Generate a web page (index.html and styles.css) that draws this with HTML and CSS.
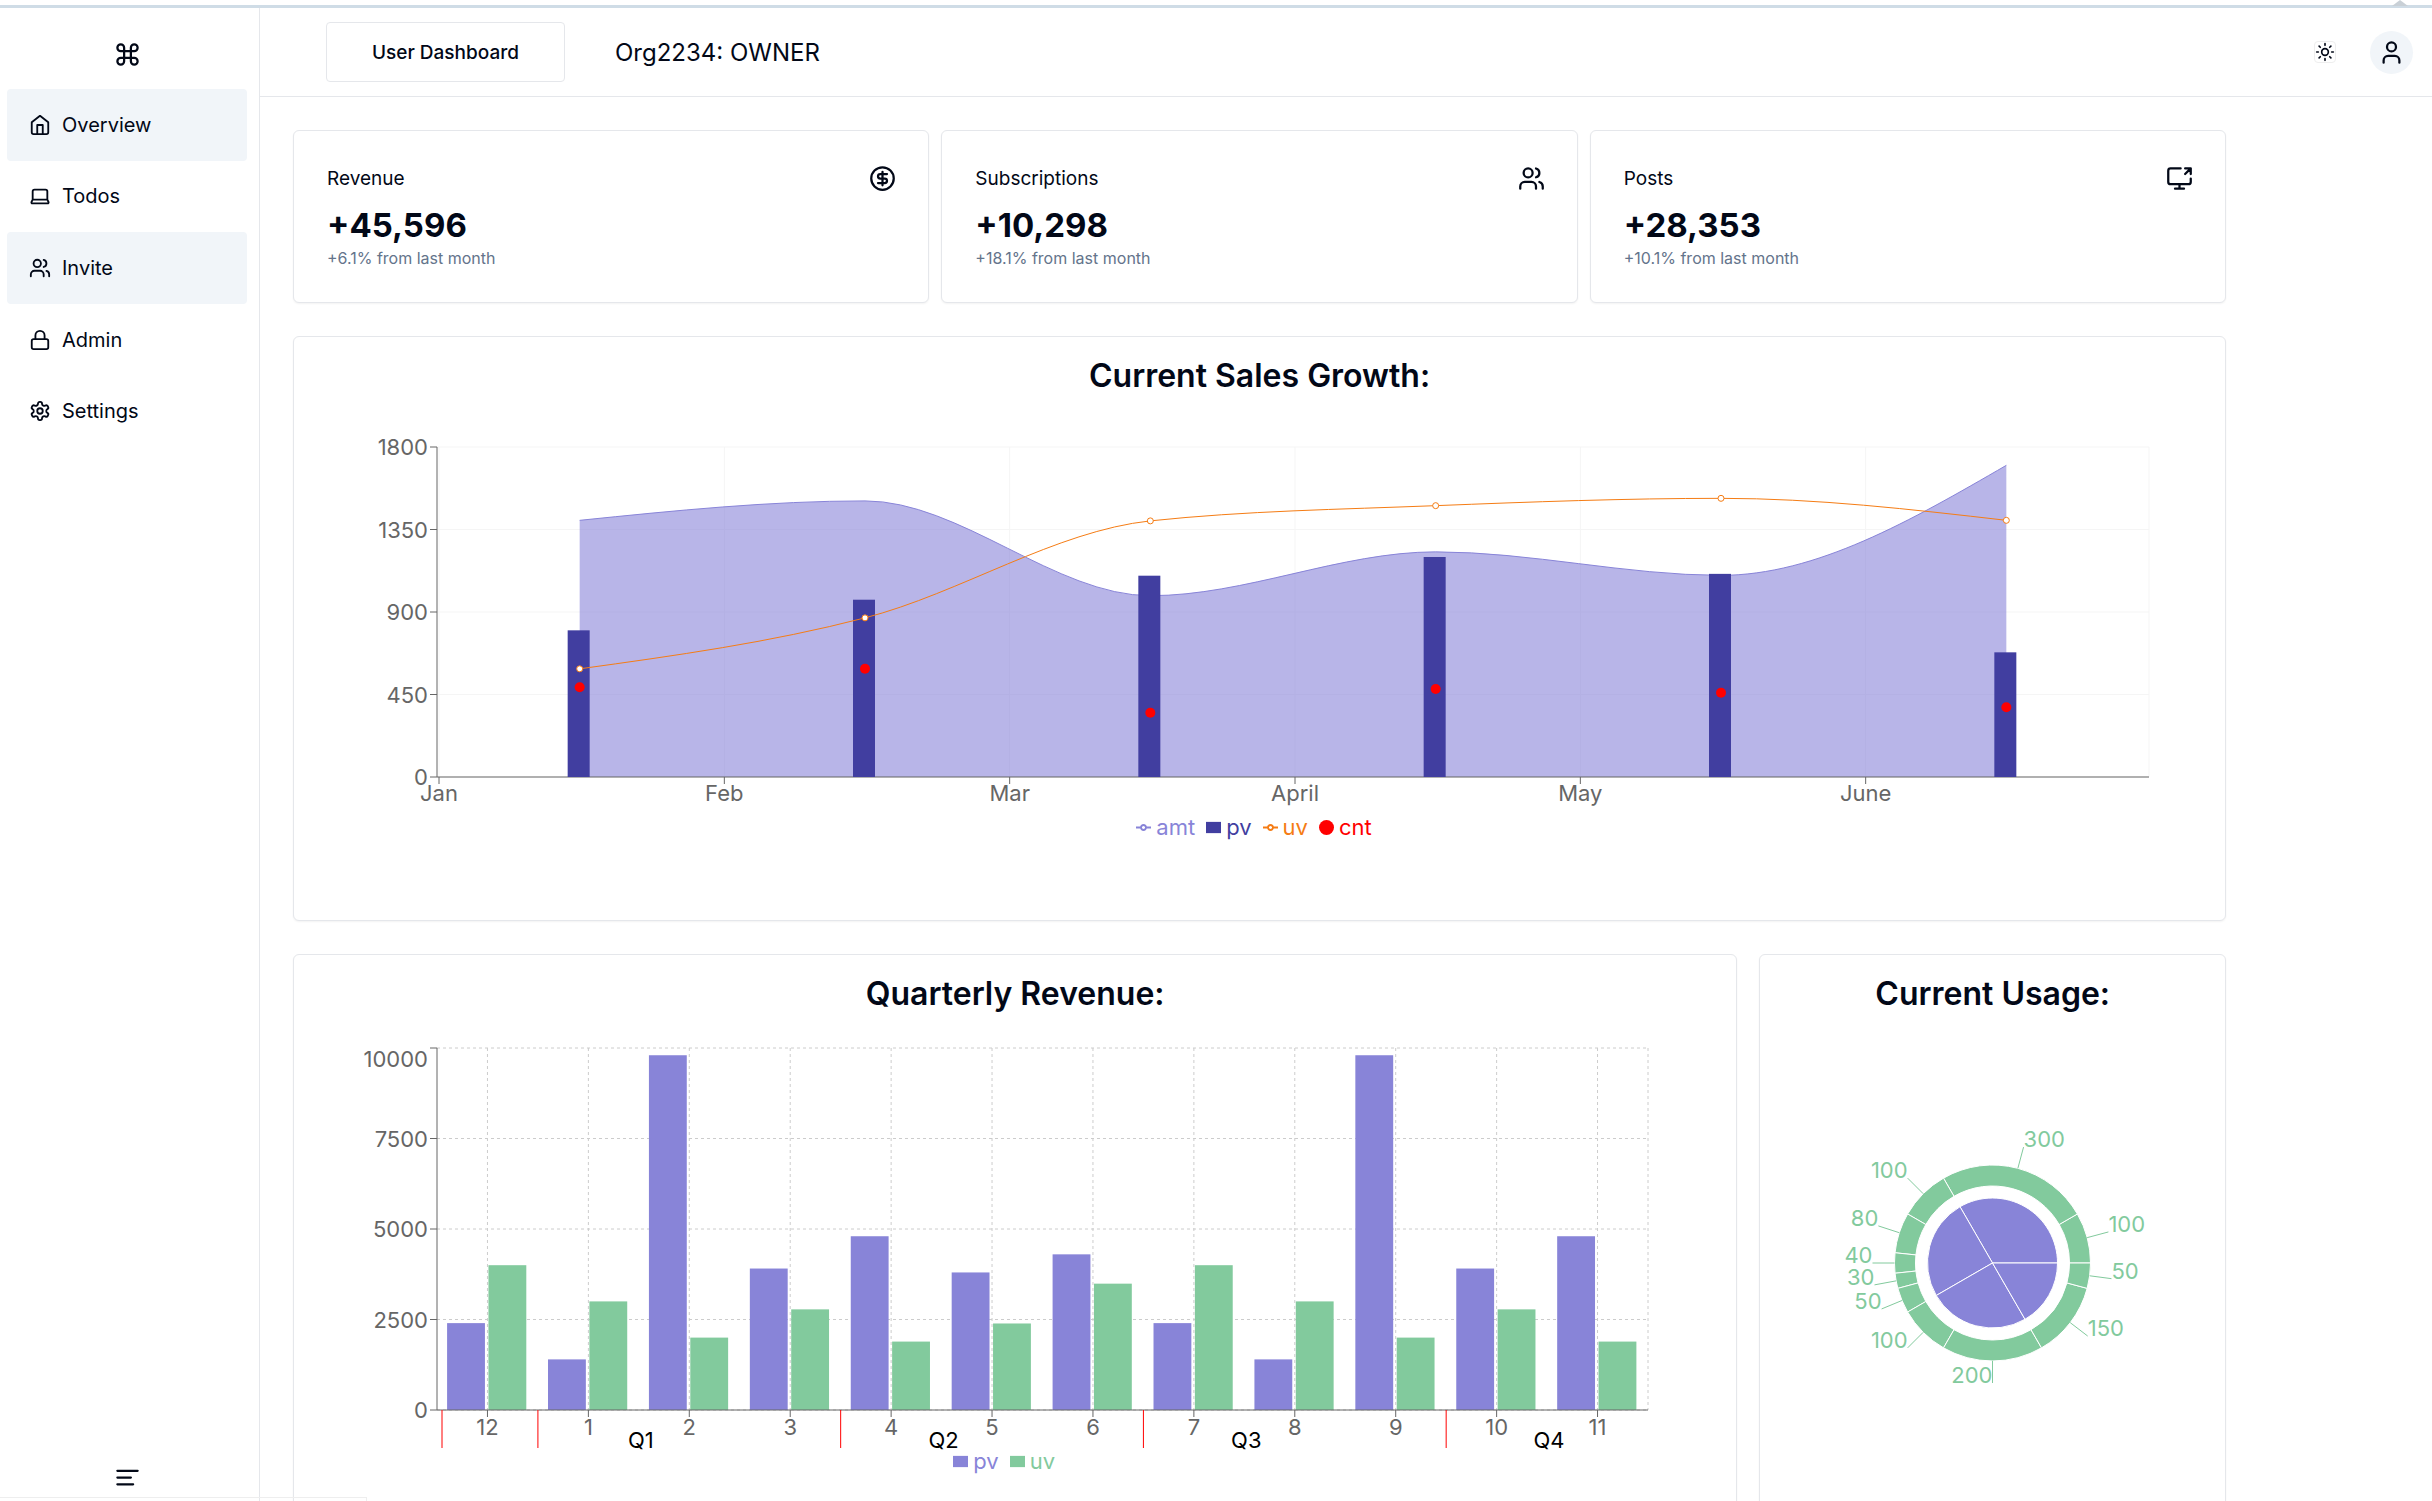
FILE: index.html
```html
<!DOCTYPE html>
<html lang="en">
<head>
  <meta charset="UTF-8" />
  <meta name="viewport" content="width=device-width, initial-scale=1.0" />
  <title>User Dashboard</title>
  <link rel="stylesheet" href="styles.css">
</head>
<body>
  <div class="window-edge">
    <svg class="window-notch" width="16" height="6" viewBox="0 0 16 6" aria-hidden="true"><path d="M0 6 8 0l8 6z" /></svg>
  </div>

  <div class="app">
    <aside class="sidebar">
      <a class="brand" href="#" aria-label="Home">
        <svg class="icon icon-lg" viewBox="0 0 24 24"><path d="M15 6v12a3 3 0 1 0 3-3H6a3 3 0 1 0 3 3V6a3 3 0 1 0-3 3h12a3 3 0 1 0-3-3" /></svg>
      </a>

      <nav class="nav">
        <a class="nav-link active" href="#">
          <svg class="icon" viewBox="0 0 24 24"><path d="m3 9 9-7 9 7v11a2 2 0 0 1-2 2H5a2 2 0 0 1-2-2z" /><path d="M9 22V12h6v10" /></svg>
          Overview
        </a>
        <a class="nav-link" href="#">
          <svg class="icon" viewBox="0 0 24 24"><path d="M20 16V7a2 2 0 0 0-2-2H6a2 2 0 0 0-2 2v9m16 0H4m16 0 1.28 2.55a1 1 0 0 1-.9 1.45H3.62a1 1 0 0 1-.9-1.45L4 16" /></svg>
          Todos
        </a>
        <a class="nav-link active" href="#">
          <svg class="icon" viewBox="0 0 24 24"><path d="M16 21v-2a4 4 0 0 0-4-4H6a4 4 0 0 0-4 4v2" /><circle cx="9" cy="7" r="4" /><path d="M22 21v-2a4 4 0 0 0-3-3.87" /><path d="M16 3.13a4 4 0 0 1 0 7.75" /></svg>
          Invite
        </a>
        <a class="nav-link" href="#">
          <svg class="icon" viewBox="0 0 24 24"><rect x="3" y="11" width="18" height="11" rx="2" /><path d="M7 11V7a5 5 0 0 1 10 0v4" /></svg>
          Admin
        </a>
        <a class="nav-link" href="#">
          <svg class="icon" viewBox="0 0 24 24"><path d="M12.22 2h-.44a2 2 0 0 0-2 2v.18a2 2 0 0 1-1 1.73l-.43.25a2 2 0 0 1-2 0l-.15-.08a2 2 0 0 0-2.73.73l-.22.38a2 2 0 0 0 .73 2.73l.15.1a2 2 0 0 1 1 1.72v.51a2 2 0 0 1-1 1.74l-.15.09a2 2 0 0 0-.73 2.73l.22.38a2 2 0 0 0 2.73.73l.15-.08a2 2 0 0 1 2 0l.43.25a2 2 0 0 1 1 1.73V20a2 2 0 0 0 2 2h.44a2 2 0 0 0 2-2v-.18a2 2 0 0 1 1-1.73l.43-.25a2 2 0 0 1 2 0l.15.08a2 2 0 0 0 2.73-.73l.22-.39a2 2 0 0 0-.73-2.73l-.15-.08a2 2 0 0 1-1-1.74v-.5a2 2 0 0 1 1-1.74l.15-.09a2 2 0 0 0 .73-2.73l-.22-.38a2 2 0 0 0-2.73-.73l-.15.08a2 2 0 0 1-2 0l-.43-.25a2 2 0 0 1-1-1.73V4a2 2 0 0 0-2-2z" /><circle cx="12" cy="12" r="3" /></svg>
          Settings
        </a>
      </nav>

      <button class="collapse" type="button" aria-label="Collapse sidebar">
        <svg class="icon icon-lg" viewBox="0 0 24 24"><path d="M21 6H3M15 12H3M17 18H3" /></svg>
      </button>
    </aside>

    <div class="main">
      <header class="header">
        <button class="btn-outline" type="button">User Dashboard</button>
        <span class="org">Org2234: OWNER</span>
        <div class="header-actions">
          <button class="theme-toggle" type="button" aria-label="Toggle theme">
            <svg class="icon" viewBox="0 0 24 24"><circle cx="12" cy="12" r="4" /><path d="M12 2v2M12 20v2M4.93 4.93l1.41 1.41M17.66 17.66l1.41 1.41M2 12h2M20 12h2M6.34 17.66l-1.41 1.41M19.07 4.93l-1.41 1.41" /></svg>
          </button>
          <button class="avatar" type="button" aria-label="Account">
            <svg class="icon icon-lg" viewBox="0 0 24 24"><path d="M19 21v-2a4 4 0 0 0-4-4H9a4 4 0 0 0-4 4v2" /><circle cx="12" cy="7" r="4" /></svg>
          </button>
        </div>
      </header>

      <main class="content">
        <section class="stats">
          <div class="card stat">
            <div class="stat-head">
              <h3>Revenue</h3>
              <svg class="icon icon-lg" viewBox="0 0 24 24"><circle cx="12" cy="12" r="10" /><path d="M16 8h-6a2 2 0 1 0 0 4h4a2 2 0 1 1 0 4H8" /><path d="M12 18V6" /></svg>
            </div>
            <div class="stat-value">+45,596</div>
            <p class="stat-note">+6.1% from last month</p>
          </div>
          <div class="card stat">
            <div class="stat-head">
              <h3>Subscriptions</h3>
              <svg class="icon icon-lg" viewBox="0 0 24 24"><path d="M16 21v-2a4 4 0 0 0-4-4H6a4 4 0 0 0-4 4v2" /><circle cx="9" cy="7" r="4" /><path d="M22 21v-2a4 4 0 0 0-3-3.87" /><path d="M16 3.13a4 4 0 0 1 0 7.75" /></svg>
            </div>
            <div class="stat-value">+10,298</div>
            <p class="stat-note">+18.1% from last month</p>
          </div>
          <div class="card stat">
            <div class="stat-head">
              <h3>Posts</h3>
              <svg class="icon icon-lg" viewBox="0 0 24 24"><path d="M13 3H4a2 2 0 0 0-2 2v10a2 2 0 0 0 2 2h16a2 2 0 0 0 2-2v-3" /><path d="M8 21h8M12 17v4M17 8l5-5M17 3h5v5" /></svg>
            </div>
            <div class="stat-value">+28,353</div>
            <p class="stat-note">+10.1% from last month</p>
          </div>
        </section>

        <section class="charts">
          <div class="card chart-card span-12">
            <h2>Current Sales Growth:</h2>
            <svg class="chart chart-growth" id="growthChart" role="img" aria-label="Current sales growth"></svg>
            <ul class="legend">
              <li class="c-amt"><svg viewBox="0 0 32 32"><path d="M0 16h10.67a5.33 5.33 0 1 1 10.66 0H32M21.33 16a5.33 5.33 0 1 1-10.66 0" /></svg>amt</li>
              <li class="c-pv-dark"><svg viewBox="0 0 32 32"><path class="solid" d="M0 4h32v24H0z" /></svg>pv</li>
              <li class="c-uv-line"><svg viewBox="0 0 32 32"><path d="M0 16h10.67a5.33 5.33 0 1 1 10.66 0H32M21.33 16a5.33 5.33 0 1 1-10.66 0" /></svg>uv</li>
              <li class="c-cnt"><svg viewBox="0 0 32 32"><circle class="solid" cx="16" cy="16" r="16" /></svg>cnt</li>
            </ul>
          </div>

          <div class="card chart-card span-9">
            <h2>Quarterly Revenue:</h2>
            <svg class="chart chart-revenue" id="revenueChart" role="img" aria-label="Quarterly revenue"></svg>
            <ul class="legend legend-revenue">
              <li class="c-pv"><svg viewBox="0 0 32 32"><path class="solid" d="M0 4h32v24H0z" /></svg>pv</li>
              <li class="c-uv"><svg viewBox="0 0 32 32"><path class="solid" d="M0 4h32v24H0z" /></svg>uv</li>
            </ul>
          </div>

          <div class="card chart-card span-3">
            <h2>Current Usage:</h2>
            <svg class="chart chart-usage" id="usageChart" role="img" aria-label="Current usage"></svg>
          </div>
        </section>
      </main>
    </div>
  </div>

  <div class="status-bubble"></div>

  <script src="charts.js"></script>
</body>
</html>
```
FILE: styles.css
```css
:root {
  --border: #e5e7eb;
  --text: #020817;
  --muted: #64748b;
  --accent: #f1f5f9;
  --purple: #8884d8;
  --green: #82ca9d;
  --indigo: #413ea0;
  --orange: #f57c14;
  --font: Inter, "Liberation Sans", sans-serif;
}

* {
  box-sizing: border-box;
}

body {
  margin: 0;
  height: 100vh;
  overflow: hidden;
  display: flex;
  flex-direction: column;
  font-family: var(--font);
  background: #fff;
  color: var(--text);
}

h2,
h3,
p,
ul {
  margin: 0;
  padding: 0;
}

button {
  padding: 0;
  border: none;
  background: transparent;
  font-family: inherit;
  color: inherit;
  cursor: pointer;
}

.icon {
  width: 22px;
  height: 22px;
  flex: none;
  fill: none;
  stroke: currentColor;
  stroke-width: 2;
  stroke-linecap: round;
  stroke-linejoin: round;
}

.icon-lg {
  width: 27px;
  height: 27px;
}

/* strip of the window frame above the page */
.window-edge {
  flex: none;
  height: 8px;
  border-bottom: 3px solid #cfdce6;
  position: relative;
}

.window-notch {
  position: absolute;
  right: 24px;
  top: 0;
  fill: #c9d0d6;
}

.app {
  flex: 1;
  min-height: 0;
  display: flex;
}

/* sidebar */
.sidebar {
  flex: none;
  width: 260px;
  padding: 0 12px 10px 7px;
  border-right: 1px solid var(--border);
  display: flex;
  flex-direction: column;
}

.brand {
  height: 81px;
  padding-bottom: 21px;
  display: flex;
  align-items: flex-end;
  justify-content: center;
  color: inherit;
}

.nav {
  height: 358px;
  display: grid;
  grid-auto-rows: 1fr;
}

.nav-link {
  display: flex;
  align-items: center;
  gap: 11px;
  padding: 0 22px;
  border-radius: 4px;
  font-size: 20px;
  color: var(--text);
  text-decoration: none;
}

.nav-link.active,
.nav-link:hover {
  background: var(--accent);
}

.collapse {
  margin: auto auto 0;
  display: flex;
}

/* header */
.main {
  flex: 1;
  min-width: 0;
  display: flex;
  flex-direction: column;
}

.header {
  flex: none;
  height: 89px;
  padding: 0 19px 0 66px;
  border-bottom: 1px solid var(--border);
  display: flex;
  align-items: center;
}

.btn-outline {
  height: 60px;
  padding: 0 45px;
  border: 1px solid var(--border);
  border-radius: 4px;
  font-size: 19px;
  font-weight: 500;
}

.org {
  margin-left: 50px;
  font-size: 24px;
}

.header-actions {
  margin-left: auto;
  display: flex;
  align-items: center;
  gap: 34px;
}

.theme-toggle {
  width: 22px;
  height: 22px;
  border: 1px solid #eee;
  border-radius: 4px;
  display: grid;
  place-items: center;
}

.theme-toggle .icon {
  width: 20px;
  height: 20px;
}

.avatar {
  width: 43px;
  height: 43px;
  border-radius: 50%;
  background: var(--accent);
  display: grid;
  place-items: center;
}

/* content */
.content {
  width: 89%;
  margin-left: 33px;
  padding-top: 33px;
}

.card {
  background: #fff;
  border: 1px solid var(--border);
  border-radius: 6px;
  box-shadow: 0 1px 2px rgba(0, 0, 0, 0.05);
}

.stats {
  display: grid;
  grid-template-columns: repeat(3, minmax(0, 1fr));
  gap: 12px;
  margin-bottom: 33px;
}

.stat {
  padding: 33px 32px 33px 33px;
}

.stat-head {
  display: flex;
  align-items: center;
  justify-content: space-between;
  height: 28px;
}

.stat-head h3 {
  font-size: 19px;
  font-weight: 400;
}

.stat-value {
  margin-top: 12px;
  font-size: 33px;
  font-weight: 700;
  line-height: 43px;
}

.stat-note {
  font-size: 16px;
  line-height: 22px;
  color: var(--muted);
}

.charts {
  display: grid;
  grid-template-columns: repeat(12, minmax(0, 1fr));
  gap: 33px 22px;
}

.span-12 {
  grid-column: span 12;
}

.span-9 {
  grid-column: span 9;
}

.span-3 {
  grid-column: span 3;
}

.chart-card {
  min-height: 585px;
  padding-top: 19px;
}

.chart-card h2 {
  font-size: 32px;
  font-weight: 600;
  line-height: 40px;
  text-align: center;
}

.chart {
  display: block;
  width: 100%;
  overflow: visible;
  font-size: 22px;
}

.chart-growth {
  height: 416px;
}

.chart-revenue {
  height: 432px;
}

.chart-usage {
  height: 480px;
}

.chart text {
  fill: #666;
}

.chart .end {
  text-anchor: end;
}

.chart .mid {
  text-anchor: middle;
}

.chart .axis {
  stroke: #666;
}

.chart .grid {
  stroke: #f5f5f5;
}

.chart .grid-dashed {
  stroke: #ccc;
  stroke-dasharray: 3 3;
}

.chart .area {
  fill: var(--purple);
  fill-opacity: 0.6;
}

.chart .area-line {
  fill: none;
  stroke: var(--purple);
}

.chart .line {
  fill: none;
  stroke: var(--orange);
}

.chart .dot {
  fill: #fff;
  stroke: var(--orange);
}

.chart .cnt {
  fill: red;
}

.chart .bar-dark {
  fill: var(--indigo);
}

.chart .bar-pv {
  fill: var(--purple);
}

.chart .bar-uv {
  fill: var(--green);
}

.chart .quarter-line {
  stroke: red;
}

.chart .quarter {
  fill: #000;
}

.chart .slice-pv {
  fill: var(--purple);
  stroke: #fff;
}

.chart .slice-uv {
  fill: var(--green);
  stroke: #fff;
}

.chart .label-line {
  stroke: var(--green);
}

.chart .label {
  fill: var(--green);
}

.legend {
  list-style: none;
  display: flex;
  justify-content: center;
  gap: 11px;
  padding-right: 11px;
  font-size: 22px;
  line-height: 30px;
}

.legend-revenue {
  padding-right: 22px;
}

.legend li {
  display: flex;
  align-items: center;
  gap: 5px;
}

.legend svg {
  width: 15px;
  height: 15px;
  fill: none;
  stroke: currentColor;
  stroke-width: 4;
}

.legend .solid {
  fill: currentColor;
  stroke: none;
}

.c-amt,
.c-pv {
  color: var(--purple);
}

.c-pv-dark {
  color: var(--indigo);
}

.c-uv-line {
  color: var(--orange);
}

.c-cnt {
  color: red;
}

.c-uv {
  color: var(--green);
}

/* browser link bubble in the corner */
.status-bubble {
  position: fixed;
  left: 0;
  bottom: 0;
  width: 367px;
  height: 4px;
  border: 1px solid #eee;
  border-width: 1px 1px 0 0;
}
```
FILE: charts.js
```js
const SVG_NS = "http://www.w3.org/2000/svg";

const growthData = [
  { name: "Jan", uv: 590, pv: 800, amt: 1400, cnt: 490 },
  { name: "Feb", uv: 868, pv: 967, amt: 1506, cnt: 590 },
  { name: "Mar", uv: 1397, pv: 1098, amt: 989, cnt: 350 },
  { name: "April", uv: 1480, pv: 1200, amt: 1228, cnt: 480 },
  { name: "May", uv: 1520, pv: 1108, amt: 1100, cnt: 460 },
  { name: "June", uv: 1400, pv: 680, amt: 1700, cnt: 380 }
];

const revenueData = [
  { month: 12, uv: 4000, pv: 2400 },
  { month: 1, uv: 3000, pv: 1398 },
  { month: 2, uv: 2000, pv: 9800 },
  { month: 3, uv: 2780, pv: 3908 },
  { month: 4, uv: 1890, pv: 4800 },
  { month: 5, uv: 2390, pv: 3800 },
  { month: 6, uv: 3490, pv: 4300 },
  { month: 7, uv: 4000, pv: 2400 },
  { month: 8, uv: 3000, pv: 1398 },
  { month: 9, uv: 2000, pv: 9800 },
  { month: 10, uv: 2780, pv: 3908 },
  { month: 11, uv: 1890, pv: 4800 }
];

// both rings of the usage chart add up to 1200
const groups = [400, 300, 300, 200];
const parts = [100, 300, 100, 80, 40, 30, 50, 100, 200, 150, 50];

function add(parent, tag, attrs, text) {
  const el = document.createElementNS(SVG_NS, tag);
  for (const key in attrs) el.setAttribute(key, attrs[key]);
  if (text !== undefined) el.textContent = text;
  parent.appendChild(el);
  return el;
}

function line(svg, cls, x1, y1, x2, y2) {
  add(svg, "line", { class: cls, x1, y1, x2, y2 });
}

// cubic path that never overshoots its points
function monotonePath(pts) {
  const n = pts.length;
  const slope = [];
  for (let i = 0; i < n - 1; i++) {
    slope.push((pts[i + 1].y - pts[i].y) / (pts[i + 1].x - pts[i].x));
  }
  const t = [];
  for (let i = 1; i < n - 1; i++) {
    const a = slope[i - 1];
    const b = slope[i];
    const p = (a + b) / 2;
    t[i] = (Math.sign(a) + Math.sign(b)) * Math.min(Math.abs(a), Math.abs(b), Math.abs(p) / 2) || 0;
  }
  t[0] = (3 * slope[0] - t[1]) / 2;
  t[n - 1] = (3 * slope[n - 2] - t[n - 2]) / 2;

  let d = `M${pts[0].x},${pts[0].y}`;
  for (let i = 0; i < n - 1; i++) {
    const dx = (pts[i + 1].x - pts[i].x) / 3;
    d += `C${pts[i].x + dx},${pts[i].y + dx * t[i]},${pts[i + 1].x - dx},${pts[i + 1].y - dx * t[i + 1]},${pts[i + 1].x},${pts[i + 1].y}`;
  }
  return d;
}

function drawGrowth() {
  const svg = document.getElementById("growthChart");
  svg.replaceChildren();
  const left = 143, top = 51, height = 330;
  const right = svg.clientWidth - 76;
  const bottom = top + height;
  const band = (right - left) / growthData.length;
  const y = v => bottom - (v / 1800) * height;
  const cx = i => left + band * (i + 0.5);

  [0, 450, 900, 1350, 1800].forEach(v => line(svg, "grid", left, y(v), right, y(v)));
  growthData.forEach((d, i) => line(svg, "grid", left + 2 + band * i, top, left + 2 + band * i, bottom));
  line(svg, "grid", right, top, right, bottom);

  const amt = monotonePath(growthData.map((d, i) => ({ x: cx(i), y: y(d.amt) })));
  add(svg, "path", { class: "area", d: `${amt}L${cx(5)},${bottom}L${cx(0)},${bottom}Z` });
  add(svg, "path", { class: "area-line", d: amt });

  line(svg, "axis", left, bottom, right, bottom);
  line(svg, "axis", left, top, left, bottom);
  [0, 450, 900, 1350, 1800].forEach(v => {
    line(svg, "axis", left - 7, y(v), left, y(v));
    add(svg, "text", { class: "end", x: left - 9, y: y(v) + 8 }, v);
  });

  growthData.forEach((d, i) => {
    const x = left + 2 + band * i;
    line(svg, "axis", x, bottom, x, bottom + 7);
    add(svg, "text", { class: "mid", x, y: bottom + 24 }, d.name);
    add(svg, "rect", { class: "bar-dark", x: cx(i) - 12, y: y(d.pv), width: 22, height: bottom - y(d.pv) });
  });

  add(svg, "path", { class: "line", d: monotonePath(growthData.map((d, i) => ({ x: cx(i), y: y(d.uv) }))) });
  growthData.forEach((d, i) => {
    add(svg, "circle", { class: "dot", cx: cx(i), cy: y(d.uv), r: 3 });
    add(svg, "circle", { class: "cnt", cx: cx(i), cy: y(d.cnt), r: 5 });
  });
}

function drawRevenue() {
  const svg = document.getElementById("revenueChart");
  svg.replaceChildren();
  const left = 143, top = 34, height = 362;
  const right = svg.clientWidth - 88;
  const bottom = top + height;
  const band = (right - left) / revenueData.length;
  const y = v => bottom - (v / 10000) * height;
  const ticks = [0, 2500, 5000, 7500, 10000];

  ticks.forEach(v => line(svg, "grid-dashed", left, y(v), right, y(v)));
  revenueData.forEach((d, i) => line(svg, "grid-dashed", left + band * (i + 0.5), top, left + band * (i + 0.5), bottom));
  line(svg, "grid-dashed", right, top, right, bottom);

  line(svg, "axis", left, top, left, bottom);
  ticks.forEach(v => {
    line(svg, "axis", left - 7, y(v), left, y(v));
    // the top label stays inside the chart
    add(svg, "text", { class: "end", x: left - 9, y: Math.max(y(v) + 8, top + 19) }, v);
  });

  const barWidth = band * 0.375;
  revenueData.forEach((d, i) => {
    const start = left + band * i;
    const cx = start + band / 2;
    add(svg, "rect", { class: "bar-pv", x: start + band * 0.1, y: y(d.pv), width: barWidth, height: bottom - y(d.pv) });
    add(svg, "rect", { class: "bar-uv", x: cx + 1, y: y(d.uv), width: barWidth, height: bottom - y(d.uv) });
    line(svg, "axis", cx, bottom, cx, bottom + 7);
    add(svg, "text", { class: "mid", x: cx, y: bottom + 25 }, d.month);
  });
  line(svg, "axis", left, bottom, right, bottom);

  line(svg, "quarter-line", left + 5, bottom, left + 5, bottom + 38);
  for (let q = 0; q < 4; q++) {
    const x = left + band * (1 + 3 * q);
    line(svg, "quarter-line", x, bottom, x, bottom + 38);
    add(svg, "text", { class: "quarter mid", x: x + band + 2, y: bottom + 38 }, `Q${q + 1}`);
  }
}

function drawUsage() {
  const svg = document.getElementById("usageChart");
  svg.replaceChildren();
  const cx = svg.clientWidth / 2;
  const cy = 249;
  const at = (r, deg) => {
    const a = (deg * Math.PI) / 180;
    return [cx + r * Math.cos(a), cy - r * Math.sin(a)];
  };

  let deg = 0;
  groups.forEach(v => {
    const end = deg + (v / 1200) * 360;
    add(svg, "path", { class: "slice-pv", d: `M${cx},${cy}L${at(65, deg)}A65,65,0,0,0,${at(65, end)}Z` });
    deg = end;
  });

  deg = 0;
  parts.forEach(v => {
    const end = deg + (v / 1200) * 360;
    add(svg, "path", { class: "slice-uv", d: `M${at(77, deg)}L${at(98, deg)}A98,98,0,0,0,${at(98, end)}L${at(77, end)}A77,77,0,0,1,${at(77, deg)}Z` });
    const mid = (deg + end) / 2;
    const [x1, y1] = at(98, mid);
    const [x2, y2] = at(120, mid);
    line(svg, "label-line", x1, y1, x2, y2);
    const onRight = x2 > cx + 1;
    add(svg, "text", { class: onRight ? "label" : "label end", x: x2, y: y2 }, v);
    deg = end;
  });
}

function drawCharts() {
  drawGrowth();
  drawRevenue();
  drawUsage();
}

drawCharts();
window.addEventListener("resize", drawCharts);
```
